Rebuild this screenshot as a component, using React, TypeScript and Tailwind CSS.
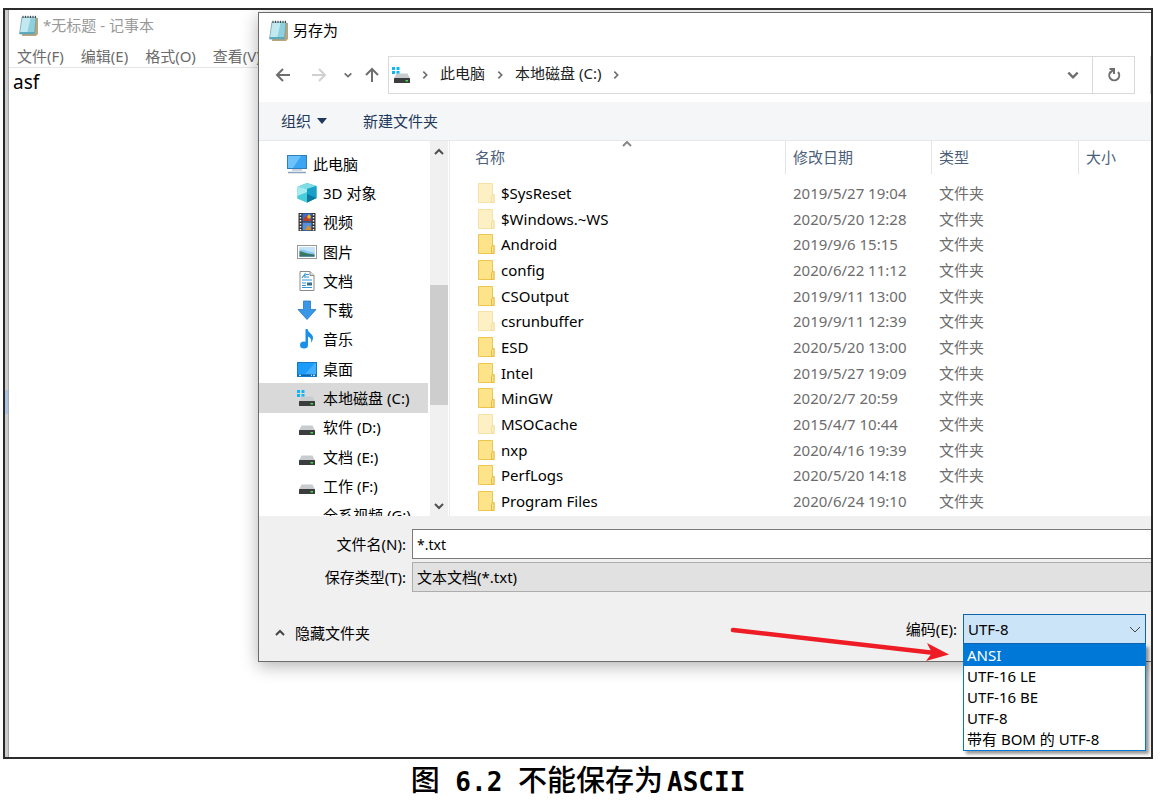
import type { ReactNode } from "react";

type IconProps = { className?: string };

const menus = ["文件(F)", "编辑(E)", "格式(O)", "查看(V)"];

const files = [
    { name: "$SysReset", date: "2019/5/27 19:04", hidden: true },
    { name: "$Windows.~WS", date: "2020/5/20 12:28", hidden: true },
    { name: "Android", date: "2019/9/6 15:15" },
    { name: "config", date: "2020/6/22 11:12" },
    { name: "CSOutput", date: "2019/9/11 13:00" },
    { name: "csrunbuffer", date: "2019/9/11 12:39", hidden: true },
    { name: "ESD", date: "2020/5/20 13:00" },
    { name: "Intel", date: "2019/5/27 19:09" },
    { name: "MinGW", date: "2020/2/7 20:59" },
    { name: "MSOCache", date: "2015/4/7 10:44", hidden: true },
    { name: "nxp", date: "2020/4/16 19:39" },
    { name: "PerfLogs", date: "2020/5/20 14:18" },
    { name: "Program Files", date: "2020/6/24 19:10" },
];

const encodings = ["ANSI", "UTF-16 LE", "UTF-16 BE", "UTF-8", "带有 BOM 的 UTF-8"];

function NotepadIcon() {
    return (
        <svg viewBox="0 0 20 21" className="w-5 h-[21px] shrink-0">
            <path d="M5 3h14v16l-2 2H3z" fill="#b9a57c" />
            <path d="M3 2h14l-1.500 17H.5z" fill="#8fd0de" stroke="#6f9aa6" strokeWidth=".7" />
            <path d="M3.500 3h8L8 18.500H1z" fill="#c3e9f0" />
            <path d="M1 17h14.500l-.2 2H.8z" fill="#5aa9bd" />
            <path d="M4 3V.8M6.500 3V.8M9 3V.8M11.500 3V.8M14 3V.8M16.500 3V.8" stroke="#444" strokeWidth="1" />
        </svg>
    );
}

function Chevron({ dir, className = "" }: { dir: "up" | "down" | "right"; className?: string }) {
    const paths = {
        up: "M2 8l4-4 4 4",
        down: "M2 4l4 4 4-4",
        right: "M4 2l4 4-4 4",
    };
    return (
        <svg viewBox="0 0 12 12" fill="none" stroke="currentColor" strokeWidth="2" className={`shrink-0 ${className}`}>
            <path d={paths[dir]} />
        </svg>
    );
}

function Arrow({ dir, className = "" }: { dir: "left" | "right" | "up"; className?: string }) {
    const paths = {
        left: "M15 8H2M8 2L2 8l6 6",
        right: "M1 8h13M8 2l6 6-6 6",
        up: "M8 15V2M2 8l6-6 6 6",
    };
    return (
        <svg viewBox="0 0 16 16" fill="none" stroke="currentColor" strokeWidth="2" className={`w-4 h-4 shrink-0 ${className}`}>
            <path d={paths[dir]} />
        </svg>
    );
}

function ComputerIcon() {
    return (
        <svg viewBox="0 0 20 20" className="w-5 h-5 shrink-0">
            <rect x=".5" y="1.500" width="19" height="13" fill="#3aa5f2" stroke="#2f7fb8" />
            <path d="M1 2h13L6 14H1z" fill="#6cc3fb" />
            <path d="M5 16h10" stroke="#9ab" strokeWidth="1" />
            <path d="M1 18.500h18" stroke="#8aa3bd" strokeWidth="1.500" />
        </svg>
    );
}

function CubeIcon() {
    return (
        <svg viewBox="0 0 20 20" className="w-5 h-5 shrink-0">
            <path d="M10 0l9.500 3v12L10 19.500.5 15.500V4z" fill="#2cb5cf" />
            <path d="M10 0l9.500 3L10 6 .5 3.500z" fill="#7fdbe4" />
            <path d="M.5 3.500L10 6v13.500l-9.500-4z" fill="#a5ecef" />
            <path d="M.5 13L10 9v10.500l-9.500-4z" fill="#48cbdb" />
            <path d="M10 6l9.500-3v12L10 19.500z" fill="#18a0c8" />
            <path d="M10 11l9.500 4L10 19.500z" fill="#0a7aa0" />
        </svg>
    );
}

function VideoIcon() {
    return (
        <svg viewBox="0 0 20 20" className="w-5 h-5 shrink-0">
            <rect x="1.500" y="1" width="17" height="18" fill="#333" />
            <rect x="5.500" y="1.500" width="9" height="8" fill="#3a6fd0" />
            <rect x="5.500" y="10.500" width="9" height="8" fill="#5590e0" />
            <path d="M6 9c1-4 3-4 4-6 2 1 4 2 4 6z" fill="#b4402e" />
            <path d="M10 5l2-3 2 3-2 2z" fill="#f0bd28" />
            <path d="M8 18l3-5 3 3v2z" fill="#d8902a" />
            <path d="M3.500 2v17M16.500 2v17" stroke="#f4f4f4" strokeWidth="1.500" strokeDasharray="1.500 1.500" />
        </svg>
    );
}

function PictureIcon() {
    return (
        <svg viewBox="0 0 20 20" className="w-5 h-5 shrink-0">
            <rect x=".5" y="3.500" width="19" height="13" fill="#fff" stroke="#999" />
            <rect x="2.500" y="5.500" width="15" height="9" fill="#8cc8f2" />
            <path d="M2.500 8c5-1 8 2 15 2.500v-5h-15z" fill="#c3e4f8" />
            <path d="M2.500 9c4 1 6 2.500 15 3.500v2h-15z" fill="#3d7a5c" />
            <path d="M2.500 13.500h15v1h-15z" fill="#2f6d98" />
        </svg>
    );
}

function DocumentIcon() {
    return (
        <svg viewBox="0 0 20 20" className="w-5 h-5 shrink-0">
            <path d="M3 .5h10l4 4v15H3z" fill="#fff" stroke="#8a8a8a" />
            <path d="M13 .5v4h4" fill="#ddd" stroke="#8a8a8a" />
            <path d="M5 7l3-4v4M9 3.500h3M9 6h3M5 9h10M5 12h4M5 14.500h4M5 16.500h10" stroke="#3395d3" strokeWidth="1.200" fill="none" />
            <rect x="10" y="11.500" width="5" height="3" fill="#356f8c" />
        </svg>
    );
}

function DownloadIcon() {
    return (
        <svg viewBox="0 0 20 20" className="w-5 h-5 shrink-0">
            <path d="M6.500 1h7v8.500h5.500L10 19.500 1 9.500h5.500z" fill="#3a97e8" stroke="#2878c0" strokeWidth=".8" />
        </svg>
    );
}

function MusicIcon() {
    return (
        <svg viewBox="0 0 20 20" className="w-5 h-5 shrink-0">
            <ellipse cx="7" cy="16" rx="4" ry="3.500" fill="#1a8fe8" />
            <path d="M8.500 0h2c.5 4 6 5 5.500 9-.2 2-1 3.500-2 4.500.8-3-.5-5-3-6V16H8.500z" fill="#1a8fe8" />
        </svg>
    );
}

function DesktopIcon() {
    return (
        <svg viewBox="0 0 20 20" className="w-5 h-5 shrink-0">
            <rect x=".5" y="3.500" width="19" height="14" fill="#1b9bfa" stroke="#1379c8" />
            <path d="M8 15L18 4h1v11z" fill="#42aefc" />
            <path d="M1 15.500h18v1.500H1z" fill="#0b64ad" />
            <path d="M2 16.300h2M14 16.300h1M16 16.300h2" stroke="#fff" />
        </svg>
    );
}

function DriveIcon({ system }: { system?: boolean }) {
    return (
        <svg viewBox="0 0 20 20" className="w-5 h-5 shrink-0">
            {system && <path d="M0 2h3v3H0zM4.500 2h3v3h-3zM0 6h3v3H0zM4.500 6h3v3h-3z" fill="#12b5f4" />}
            <path d="M4.500 8.500h11l2.500 5H2z" fill="#c9ccce" />
            <rect x="2" y="13" width="16" height="5" rx=".5" fill="#3a3c3e" />
            <rect x="13.500" y="15" width="2.500" height="1.500" fill="#3fe04a" />
        </svg>
    );
}

function FolderIcon({ className = "" }: IconProps) {
    return (
        <svg viewBox="0 0 17 20" className={`w-[17px] h-5 shrink-0 ${className}`}>
            <path d="M.5.500h14v11h1.500v8H.5z" fill="#fde38a" stroke="#ecc64d" />
            <path d="M13.500 19.500v-6l1-2h1.500v8z" fill="#fbe08a" stroke="#e3b73a" strokeWidth=".9" />
        </svg>
    );
}

const tree: { label: string; icon: ReactNode; root?: boolean; selected?: boolean }[] = [
    { label: "此电脑", icon: <ComputerIcon />, root: true },
    { label: "3D 对象", icon: <CubeIcon /> },
    { label: "视频", icon: <VideoIcon /> },
    { label: "图片", icon: <PictureIcon /> },
    { label: "文档", icon: <DocumentIcon /> },
    { label: "下载", icon: <DownloadIcon /> },
    { label: "音乐", icon: <MusicIcon /> },
    { label: "桌面", icon: <DesktopIcon /> },
    { label: "本地磁盘 (C:)", icon: <DriveIcon system />, selected: true },
    { label: "软件 (D:)", icon: <DriveIcon /> },
    { label: "文档 (E:)", icon: <DriveIcon /> },
    { label: "工作 (F:)", icon: <DriveIcon /> },
    { label: "全系视频 (G:)", icon: null },
];

function Notepad() {
    return (
        <section className="col-start-1 row-start-1 flex bg-white">
            <div className="w-[3px] shrink-0 bg-[#cdcdcd] pt-[380px]">
                <div className="h-6 bg-[#adc2e0]" />
            </div>
            <div className="flex flex-1 flex-col border-l border-[#a8a8a8]">
                <header className="flex h-[30px] items-center gap-1 pl-[10px] text-[#999]">
                    <NotepadIcon />
                    <h1>*无标题 - 记事本</h1>
                </header>
                <nav className="flex h-7 items-end gap-[17px] border-b border-[#e6e6e6] pb-px pl-2 text-[#6b6b6b]">
                    {menus.map((menu) => (
                        <button key={menu} className="whitespace-nowrap">
                            {menu}
                        </button>
                    ))}
                </nav>
                <textarea
                    aria-label="文本编辑器"
                    defaultValue="asf"
                    className="min-h-[689px] flex-1 resize-none px-1 text-[19px] leading-7 outline-none"
                />
            </div>
        </section>
    );
}

function AddressBar() {
    return (
        <div className="flex h-[55px] items-center pl-4 text-[#6e6e6e]">
            <button aria-label="后退">
                <Arrow dir="left" />
            </button>
            <button aria-label="前进" className="ml-5 text-[#d0d0d0]">
                <Arrow dir="right" />
            </button>
            <button aria-label="最近位置" className="ml-4">
                <Chevron dir="down" className="w-[10px] h-[10px]" />
            </button>
            <button aria-label="上移" className="ml-[11px]">
                <Arrow dir="up" />
            </button>
            <div className="ml-2 flex h-[38px] flex-1 items-center border border-[#d9d9d9] pl-[3px]">
                <DriveIcon system />
                <Chevron dir="right" className="ml-2 w-[10px] h-[10px]" />
                <button className="ml-[10px] pb-[3px] text-[#222]">此电脑</button>
                <Chevron dir="right" className="ml-[10px] w-[10px] h-[10px]" />
                <button className="ml-[10px] pb-[3px] text-[#222]">本地磁盘 (C:)</button>
                <Chevron dir="right" className="ml-[10px] w-[10px] h-[10px]" />
                <button aria-label="展开" className="ml-auto mr-3">
                    <Chevron dir="down" className="w-[14px] h-[14px]" />
                </button>
                <button aria-label="刷新" className="flex h-full w-[42px] items-center justify-center border-l border-[#d9d9d9]">
                    <svg viewBox="0 0 14 15" fill="none" stroke="currentColor" strokeWidth="2" className="w-[14px] h-[15px]">
                        <path d="M3.500 5A5 5 0 1 0 11 5M2.500 2H7v5M7 2L3 6" />
                    </svg>
                </button>
            </div>
            <div className="ml-[15px] h-[38px] w-px bg-[#d9d9d9]" />
        </div>
    );
}

function FolderTree() {
    return (
        <aside className="flex w-[190px] shrink-0">
            <ul className="grid h-[389px] w-[169px] auto-rows-fr pt-2">
                {tree.map(({ label, icon, root, selected }) => (
                    <li
                        key={label}
                        className={`flex items-center gap-[6px] whitespace-nowrap ${root ? "pl-7" : "pl-[38px]"} ${selected ? "bg-[#d9d9d9]" : ""}`}
                    >
                        <span className="w-5 shrink-0">{icon}</span>
                        {label}
                    </li>
                ))}
            </ul>
            <div className="ml-[2px] flex w-[18px] flex-col items-center bg-[#f0f0f0] text-[#505050]">
                <Chevron dir="up" className="mt-[5px] w-3 h-3" />
                <div className="mt-[127px] h-[120px] w-full bg-[#cdcdcd]" />
                <Chevron dir="down" className="mt-auto mb-1 w-3 h-3" />
            </div>
        </aside>
    );
}

function FileTable() {
    return (
        <div className="relative flex-1 border-l border-[#ececec]">
            <Chevron dir="up" className="absolute left-[171px] -top-[3px] w-3 h-3 text-[#888]" />
            <table className="h-[373px] w-full table-fixed text-left text-[#6d6d6d]">
                <colgroup>
                    <col />
                    <col className="w-[146px]" />
                    <col className="w-[147px]" />
                    <col className="w-[73px]" />
                </colgroup>
                <thead>
                    <tr className="h-[39px] align-top text-[#4c607a]">
                        <th className="p-0 font-normal">
                            <div className="h-[33px] pl-[25px] leading-8">名称</div>
                        </th>
                        {["修改日期", "类型", "大小"].map((title) => (
                            <th key={title} className="p-0 font-normal">
                                <div className="h-[33px] border-l border-[#e5e5e5] pl-[7px] leading-8">{title}</div>
                            </th>
                        ))}
                    </tr>
                </thead>
                <tbody>
                    {files.map((file) => (
                        <tr key={file.name}>
                            <td className="p-0">
                                <div className="flex items-center gap-[6px] pl-7 text-black">
                                    <FolderIcon className={file.hidden ? "opacity-50" : ""} />
                                    {file.name}
                                </div>
                            </td>
                            <td className="p-0 pl-2">{file.date}</td>
                            <td className="p-0 pl-2">文件夹</td>
                            <td className="p-0" />
                        </tr>
                    ))}
                </tbody>
            </table>
        </div>
    );
}

function SaveForm() {
    return (
        <form className="bg-[#f0f0f0] pt-[13px]">
            <div className="grid grid-cols-[147px_1fr] items-center gap-x-[6px] gap-y-[3px]">
                <label htmlFor="filename" className="text-right">
                    文件名(N):
                </label>
                <input
                    id="filename"
                    defaultValue="*.txt"
                    className="h-[30px] border border-r-0 border-[#7a7a7a] bg-white px-1 text-sm outline-none"
                />
                <label htmlFor="filetype" className="text-right">
                    保存类型(T):
                </label>
                <select
                    id="filetype"
                    className="h-[30px] appearance-none border border-r-0 border-[#adadad] bg-[#e1e1e1] px-1 outline-none"
                >
                    <option>文本文档(*.txt)</option>
                </select>
            </div>
            <div className="relative flex items-center pt-[22px] pr-[5px] pb-[17px] pl-[15px]">
                <button type="button" className="mt-2 flex items-center gap-[9px]">
                    <Chevron dir="up" className="w-3 h-3 text-[#444]" />
                    隐藏文件夹
                </button>
                <svg viewBox="0 0 220 40" className="absolute top-8 right-[201px] h-10 w-[220px]">
                    <path d="M3 6l202 23" stroke="#ee1c25" strokeWidth="4.500" strokeLinecap="round" />
                    <path d="M197 19l22 11.500L196 37l6-8z" fill="#ee1c25" />
                </svg>
                <label htmlFor="encoding" className="mr-[6px] ml-auto">
                    编码(E):
                </label>
                <div className="relative w-[183px]">
                    <select
                        id="encoding"
                        defaultValue="UTF-8"
                        className="block h-[30px] w-full appearance-none border border-[#0f64ad] bg-[#cce4f7] px-1 outline-none"
                    >
                        {encodings.map((name) => (
                            <option key={name}>{name}</option>
                        ))}
                    </select>
                    <svg viewBox="0 0 12 12" fill="none" stroke="#444" className="pointer-events-none absolute top-[10px] right-[5px] w-3 h-3">
                        <path d="M1 3l5 5 5-5" />
                    </svg>
                    <ul
                        role="listbox"
                        aria-label="编码"
                        className="absolute top-full left-0 z-10 w-full border border-[#0078d7] bg-white shadow-[3px_3px_3px_rgba(0,0,0,0.4)]"
                    >
                        {encodings.map((name, i) => (
                            <li
                                key={name}
                                role="option"
                                aria-selected={i === 0}
                                className={`h-[21px] pl-[3px] leading-[21px] ${i === 0 ? "bg-[#0078d7] text-white" : ""}`}
                            >
                                {name}
                            </li>
                        ))}
                    </ul>
                </div>
            </div>
        </form>
    );
}

function SaveDialog() {
    return (
        <section className="z-10 col-start-1 row-start-1 mt-[2px] ml-[253px] self-start border border-r-0 border-[#6b6b6b] bg-white shadow-[0_4px_16px_rgba(0,0,0,0.3)]">
            <header className="flex h-[34px] items-center gap-1 pl-[10px]">
                <NotepadIcon />
                <h2>另存为</h2>
            </header>
            <AddressBar />
            <div className="flex h-[39px] items-center gap-9 border-b border-[#e8e8e8] bg-[#f5f6f8] pl-[22px] text-[#1e395b]">
                <button className="flex items-center gap-[6px]">
                    组织
                    <svg viewBox="0 0 10 6" className="h-[6px] w-[10px] fill-[#1e395b]">
                        <path d="M0 0h10L5 6z" />
                    </svg>
                </button>
                <button>新建文件夹</button>
            </div>
            <div className="flex h-[375px] overflow-hidden">
                <FolderTree />
                <FileTable />
            </div>
            <SaveForm />
        </section>
    );
}

export default function App() {
    return (
        <main className="bg-white pt-2 pr-4 pl-[3px] font-['Noto_Sans','Noto_Sans_CJK_SC',sans-serif] text-[15px] leading-5 text-black">
            <figure>
                <div className="grid overflow-hidden border-2 border-[#2b2b2b]">
                    <Notepad />
                    <SaveDialog />
                </div>
                <figcaption className="mt-[2px] text-center font-['DejaVu_Sans_Mono','Noto_Sans_CJK_SC',monospace] text-[26px] leading-10 font-bold">
                    <span className="text-[29px] font-medium">图</span> 6.2 <span className="text-[29px] font-medium">不能保存为</span>
                    <span className="ml-1">ASCII</span>
                </figcaption>
            </figure>
        </main>
    );
}
